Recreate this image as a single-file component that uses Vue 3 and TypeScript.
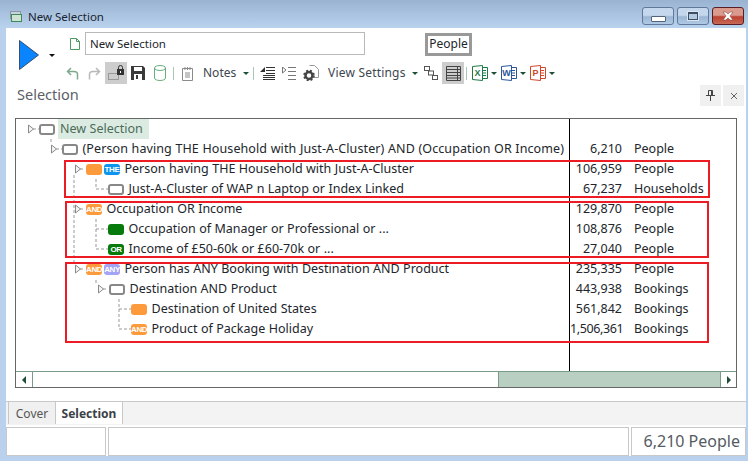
<template>
  <div class="app">
    <header class="titlebar">
      <svg class="title-icon" width="12" height="11" viewBox="0 0 12 11">
        <rect x="0.5" y="0.5" width="10" height="7" fill="#c9d3df" stroke="#8b97a5" />
        <rect x="1.5" y="3.5" width="10" height="7" fill="#cfe3d4" stroke="#3f8a5a" />
      </svg>
      <span class="title-text">New Selection</span>
      <div class="win-btns">
        <button class="win-btn" type="button"><i class="min-glyph"></i></button>
        <button class="win-btn" type="button"><i class="max-glyph"></i></button>
        <button class="win-btn close" type="button">
          <svg width="14" height="10" viewBox="0 0 14 10">
            <path d="M2 1h3l2 2 2-2h3L9 5l3 4H9L7 7 5 9H2l3-4z" fill="#fff" stroke="#8c4a40" stroke-width="0.6" />
          </svg>
        </button>
      </div>
    </header>

    <main class="client">
      <section class="ribbon">
        <div class="run">
          <svg width="20" height="30" viewBox="0 0 20 30">
            <path d="M0.5 0.5 19.5 15 0.5 29.5z" fill="#0a84ff" stroke="#35506e" />
          </svg>
          <i class="caret black"></i>
        </div>
        <div class="ribbon-rows">
          <div class="name-row">
            <svg class="doc" width="10" height="12" viewBox="0 0 10 12">
              <path d="M.5.5h6l3 3v8h-9zM6.5.5v3h3" fill="#fff" stroke="#4c9a5f" />
            </svg>
            <div class="name-input">New Selection</div>
            <div class="unit-box">People</div>
          </div>
          <div class="tools">
            <span class="tb">
              <svg width="13" height="13" viewBox="0 0 13 13">
                <path d="M11.5 12.5V7.5Q11.5 4.5 8 4.5H2M5 1 1.5 4.5 5 8" fill="none" stroke="#7fa98c" stroke-width="1.5" />
              </svg>
            </span>
            <span class="tb">
              <svg width="13" height="13" viewBox="0 0 13 13">
                <path d="M1.5 12.5V7.5Q1.5 4.5 5 4.5h6M8 1l3.5 3.5L8 8" fill="none" stroke="#b9b9b9" stroke-width="1.5" />
              </svg>
            </span>
            <span class="tb active">
              <svg width="16" height="16" viewBox="0 0 16 16">
                <rect x="0.5" y="8.5" width="10" height="6" fill="none" stroke="#999" />
                <rect x="9" y="4" width="7" height="6" fill="#333" />
                <path d="M10.5 4V2.5a2 2 0 0 1 4 0V4" fill="none" stroke="#333" />
                <rect x="12" y="6" width="1" height="2" fill="#fff" />
              </svg>
            </span>
            <span class="tb">
              <svg width="14" height="14" viewBox="0 0 14 14">
                <path d="M0 0h12l2 2v12H0z" fill="#3a3a3a" />
                <rect x="3" y="1" width="8" height="4" fill="#fff" />
                <rect x="3" y="8" width="8" height="6" fill="#fff" />
                <rect x="5" y="9" width="2" height="4" fill="#3a3a3a" />
              </svg>
            </span>
            <span class="tb">
              <svg width="12" height="16" viewBox="0 0 12 16">
                <path d="M.5 3v10c0 3.3 11 3.3 11 0V3M.5 3c0-3.3 11-3.3 11 0s-11 3.3-11 0z" fill="#fff" stroke="#6aae7e" />
              </svg>
            </span>
            <i class="sep"></i>
            <span class="tb">
              <svg width="11" height="15" viewBox="0 0 11 15">
                <path d="M.5 2.5h10v12H.5zM3 1v3M5.5 1v3M8 1v3M3 7h5M3 9h5M3 11h5" fill="#fff" stroke="#8a8a8a" />
              </svg>
            </span>
            <span class="tool-text notes">Notes</span>
            <i class="caret green caret-notes"></i>
            <i class="sep sep-notes"></i>
            <span class="tb indent-a">
              <svg width="15" height="13" viewBox="0 0 15 13">
                <path d="M5 0v5H0z" fill="#333" />
                <path d="M6 .5h9M6 3.5h9M6 6.5h9M3 8.5h12M3 10.5h12M3 12.5h12" stroke="#333" />
              </svg>
            </span>
            <span class="tb">
              <svg width="14" height="13" viewBox="0 0 14 13">
                <path d="M.5 0v6L4 3z" fill="#fff" stroke="#777" />
                <path d="M6 .5h8M6 4.5h8M6 8.5h8M6 12.5h8" stroke="#777" />
              </svg>
            </span>
            <span class="tb">
              <svg width="16" height="16" viewBox="0 0 16 16">
                <path d="M6.5.5h5l4 4v8h-5" fill="#fff" stroke="#999" />
                <circle cx="6" cy="10.5" r="3.5" fill="none" stroke="#444" stroke-width="2.5" />
                <circle cx="6" cy="10.5" r="5" fill="none" stroke="#444" stroke-width="1.5" stroke-dasharray="2 2" />
              </svg>
            </span>
            <span class="tool-text view">View Settings</span>
            <i class="caret green caret-view"></i>
            <span class="tb hier">
              <svg width="14" height="14" viewBox="0 0 14 14">
                <path d="M3 3 7 7l4 4" stroke="#777" fill="none" />
                <rect x="0.5" y="0.5" width="5" height="4" fill="#fff" stroke="#555" />
                <rect x="4.5" y="5" width="5" height="4" fill="#fff" stroke="#555" />
                <rect x="8.5" y="9.5" width="5" height="4" fill="#fff" stroke="#555" />
              </svg>
            </span>
            <span class="tb active">
              <svg width="15" height="15" viewBox="0 0 15 15">
                <path d="M.5.5h14v14H.5zM.5 3.5h14M.5 6.5h14M.5 9.5h14M.5 12h14M11.5.5v14" fill="none" stroke="#444" />
              </svg>
            </span>
            <i class="sep sep-office"></i>
            <span v-for="app in officeApps" :key="app.letter" class="office">
              <svg width="16" height="16" viewBox="0 0 16 16">
                <path d="M8 2.5h7.5v11H8" fill="#fff" :stroke="app.color" />
                <path d="M11 5.5h3M11 8h3M11 10.5h3" :stroke="app.color" />
                <path d="M.5 1.5 10.5.5v15l-10-1z" fill="#fff" :stroke="app.color" />
                <text x="5.5" y="11" text-anchor="middle" class="office-letter" :fill="app.color">{{ app.letter }}</text>
              </svg>
              <i class="caret green"></i>
            </span>
          </div>
        </div>
      </section>

      <div class="pane-head">
        <span class="pane-title">Selection</span>
        <div class="pane-btns">
          <button class="pane-btn" type="button">
            <svg width="9" height="11" viewBox="0 0 9 11">
              <path d="M2.5.5h4v5h-4zM0 5.5h9M4.5 6v5M5.5 1v4" fill="none" stroke="#444" />
            </svg>
          </button>
          <button class="pane-btn" type="button">
            <svg width="8" height="8" viewBox="0 0 8 8">
              <path d="M1 1l6 6M7 1 1 7" stroke="#666" />
            </svg>
          </button>
        </div>
      </div>

      <section class="tree-panel">
        <div class="tree-body">
          <div class="names">
            <div
              v-for="row in rows"
              :key="row.label"
              class="row"
              :style="{ paddingLeft: row.indent + 'px' }"
            >
              <svg v-if="row.expander" class="expander" width="6" height="10" viewBox="0 0 6 10">
                <path d="M.5 1v8L5.5 5z" fill="#f4f4f4" stroke="#8a8a8a" />
              </svg>
              <span
                v-for="(pill, i) in row.pills"
                :key="i"
                class="pill"
                :class="pill.kind"
              >{{ pill.text }}</span>
              <span class="label" :class="{ selected: row.selected, wide: row.label.length > 60 }">{{ row.label }}</span>
            </div>
          </div>
          <div class="values">
            <div v-for="row in rows" :key="row.label" class="row">
              <span class="count" :class="{ tight: row.count.length > 7 }">{{ row.count }}</span>
              <span class="unit">{{ row.unit }}</span>
            </div>
          </div>

          <svg class="connectors" width="553" height="252" viewBox="16 119 553 252">
            <path
              d="M33 129h6M51 139v4M56 149h6M74 175v87M80 169h5M96 179v10h12M80 209h5M96 219v30h12M96 229h12M80 269h5M96 280v3M103 289h5M119 299v30h12M119 309h12"
              fill="none"
              stroke="#999"
              stroke-dasharray="3 2"
            />
          </svg>
          <i class="redbox box-a"></i>
          <i class="redbox box-b"></i>
          <i class="redbox box-c"></i>
        </div>
        <div class="hscroll">
          <span class="arrow">
            <svg width="5" height="8" viewBox="0 0 5 8"><path d="M4 0v8L0 4z" fill="#1f4d36" /></svg>
          </span>
          <span class="thumb"></span>
          <span class="track"></span>
          <span class="arrow right">
            <svg width="5" height="8" viewBox="0 0 5 8"><path d="M1 0v8l4-4z" fill="#1f4d36" /></svg>
          </span>
        </div>
      </section>

      <nav class="tabs">
        <span class="tab">Cover</span>
        <span class="tab current">Selection</span>
      </nav>

      <footer class="status">
        <span class="cell first"></span>
        <span class="cell middle"></span>
        <span class="cell total">6,210 People</span>
      </footer>
    </main>
  </div>
</template>

<script setup lang="ts">
interface Pill {
  kind: string
  text: string
}

interface TreeRow {
  indent: number
  expander: boolean
  pills: Pill[]
  label: string
  count: string
  unit: string
  selected?: boolean
}

const outline: Pill = { kind: 'outline', text: '' }
const orange: Pill = { kind: 'orange', text: '' }
const green: Pill = { kind: 'green', text: '' }
const and: Pill = { kind: 'orange', text: 'AND' }

const rows: TreeRow[] = [
  { indent: 12, expander: true, pills: [outline], label: 'New Selection', count: '', unit: '', selected: true },
  { indent: 35, expander: true, pills: [outline], label: '(Person having THE Household with Just-A-Cluster) AND (Occupation OR Income)', count: '6,210', unit: 'People' },
  { indent: 59, expander: true, pills: [orange, { kind: 'blue', text: 'THE' }], label: 'Person having THE Household with Just-A-Cluster', count: '106,959', unit: 'People' },
  { indent: 92, expander: false, pills: [outline], label: 'Just-A-Cluster of WAP n Laptop or Index Linked', count: '67,237', unit: 'Households' },
  { indent: 59, expander: true, pills: [and], label: 'Occupation OR Income', count: '129,870', unit: 'People' },
  { indent: 92, expander: false, pills: [green], label: 'Occupation of Manager or Professional or ...', count: '108,876', unit: 'People' },
  { indent: 92, expander: false, pills: [{ kind: 'green', text: 'OR' }], label: 'Income of £50-60k or £60-70k or ...', count: '27,040', unit: 'People' },
  { indent: 59, expander: true, pills: [and, { kind: 'violet', text: 'ANY' }], label: 'Person has ANY Booking with Destination AND Product', count: '235,335', unit: 'People' },
  { indent: 82, expander: true, pills: [outline], label: 'Destination AND Product', count: '443,938', unit: 'Bookings' },
  { indent: 115, expander: false, pills: [orange], label: 'Destination of United States', count: '561,842', unit: 'Bookings' },
  { indent: 115, expander: false, pills: [and], label: 'Product of Package Holiday', count: '1,506,361', unit: 'Bookings' },
]

const officeApps = [
  { letter: 'X', color: '#1e7a45' },
  { letter: 'W', color: '#2b579a' },
  { letter: 'P', color: '#d2472a' },
]
</script>

<style>
html,
body {
  margin: 0;
  background: #b9d1ec;
}
</style>

<style scoped>
.app {
  width: 748px;
  height: 461px;
  display: flex;
  flex-direction: column;
  overflow: hidden;
  background: #b9d1ec;
  font-family: 'Noto Sans', 'Open Sans', sans-serif;
  font-size: 12px;
  color: #22262c;
}

.titlebar {
  flex: none;
  height: 28px;
  display: flex;
  align-items: center;
  padding: 4px 4px 0 10px;
  box-sizing: border-box;
  background: linear-gradient(#99b3d1, #b9d2ee);
}

.title-text {
  margin-left: 6px;
  font-size: 11.5px;
  color: #1b2430;
}

.win-btns {
  margin-left: auto;
  display: flex;
  gap: 3px;
  align-self: flex-start;
  margin-top: 3px;
}

.win-btn {
  width: 32px;
  height: 18px;
  padding: 0;
  display: flex;
  align-items: center;
  justify-content: center;
  box-sizing: border-box;
  border: 1px solid #62789a;
  border-radius: 3px;
  background: linear-gradient(#c5d7ec 0 45%, #9bb6d5 55%, #b0c9e4);
}

.win-btn.close {
  border-color: #5a1f24;
  background: linear-gradient(#db9a8e 0 45%, #bd4031 55%, #c66a55);
}

.min-glyph {
  width: 13px;
  height: 4px;
  margin-top: 5px;
  border: 1px solid #53657d;
  background: #fff;
  border-radius: 1px;
}

.max-glyph {
  width: 8px;
  height: 5px;
  border: 1px solid #3f4f63;
  border-top-width: 2px;
  background: #b5cbe4;
  outline: 1px solid #dce7f4;
}

.client {
  flex: 1;
  margin: 0 2px 5px 6px;
  display: flex;
  flex-direction: column;
  background: #fff;
  min-height: 0;
}

.ribbon {
  flex: none;
  display: flex;
  height: 57px;
  padding-top: 4px;
  box-sizing: border-box;
}

.run {
  width: 55px;
  padding: 8px 0 0 13px;
  box-sizing: border-box;
  display: flex;
  align-items: flex-start;
}

.run .caret {
  margin: 14px 0 0 10px;
}

.ribbon-rows {
  display: flex;
  flex-direction: column;
  gap: 7px;
}

.name-row {
  display: flex;
  align-items: center;
  height: 23px;
  padding-left: 9px;
}

.doc {
  margin-right: 5px;
}

.name-input {
  width: 280px;
  height: 23px;
  box-sizing: border-box;
  border: 1px solid #b9b9b9;
  padding-left: 4px;
  font-size: 11.5px;
  line-height: 21px;
}

.unit-box {
  margin: 1px 0 0 60px;
  width: 47px;
  height: 23px;
  box-sizing: border-box;
  border: 3px solid #999;
  text-align: center;
  line-height: 16px;
}

.tools {
  display: flex;
  align-items: center;
  height: 22px;
}

.tb {
  flex: none;
  width: 22px;
  height: 22px;
  display: flex;
  align-items: center;
  justify-content: center;
}

.tb.active {
  background: #cdcdcd;
}

.sep {
  flex: none;
  width: 1px;
  height: 13px;
  margin: 0 2px;
  background: #a9c8b4;
}

.tool-text {
  flex: none;
  line-height: 20px;
  margin-top: -1px;
  color: #3d4650;
}

.notes {
  margin-left: 5px;
  width: 35px;
}

.caret {
  flex: none;
  width: 0;
  height: 0;
  border-left: 3px solid transparent;
  border-right: 3px solid transparent;
  border-top: 3px solid #1f4d36;
}

.caret.black {
  border-top-color: #111;
}

.caret-notes {
  margin-left: 5px;
}

.sep-notes {
  margin: 0 0 0 4px;
}

.indent-a {
  margin-left: 2px;
}

.view {
  margin-left: 6px;
  width: 78px;
  letter-spacing: 0.2px;
}

.caret-view {
  margin-left: 6px;
}

.hier {
  margin-left: 2px;
}

.sep-office {
  margin: 0 5px 0 2px;
}

.office {
  flex: none;
  width: 29px;
  display: flex;
  align-items: center;
  gap: 3px;
}

.office-letter {
  font-family: 'Liberation Sans', sans-serif;
  font-size: 9px;
  font-weight: 700;
}

.pane-head {
  flex: none;
  height: 33px;
  display: flex;
  align-items: flex-start;
  padding: 0 2px 0 11px;
}

.pane-title {
  font-size: 14.5px;
  color: #5b6068;
  line-height: 18px;
}

.pane-btns {
  margin-left: auto;
  display: flex;
  gap: 2px;
}

.pane-btn {
  width: 21px;
  height: 21px;
  padding: 0;
  border: 0;
  display: flex;
  align-items: center;
  justify-content: center;
  background: #f0f0f0;
}

.tree-panel {
  flex: none;
  width: 722px;
  height: 270px;
  margin-left: 9px;
  box-sizing: border-box;
  border: 1px solid #666;
  display: flex;
  flex-direction: column;
  font-size: 12.5px;
  word-spacing: 0.2px;
}

.tree-body {
  position: relative;
  flex: none;
  height: 252px;
  display: flex;
  overflow: hidden;
}

.names {
  flex: none;
  width: 553px;
  border-right: 1px solid #000;
  white-space: nowrap;
  overflow: hidden;
}

.values {
  flex: 1;
}

.row {
  height: 20px;
  display: flex;
  align-items: center;
  box-sizing: border-box;
  line-height: 20px;
}

.expander {
  flex: none;
  margin-right: 5px;
}

.pill {
  flex: none;
  width: 16px;
  height: 11px;
  margin-right: 2px;
  box-sizing: border-box;
  border-radius: 3px;
  overflow: hidden;
  text-align: center;
  font-family: 'Liberation Sans', sans-serif;
  font-size: 8px;
  font-weight: 700;
  letter-spacing: -0.4px;
  line-height: 11px;
  color: #fff;
}

.pill.outline {
  border: 2px solid #888;
  background: #fff;
}

.pill.orange {
  background: #fd9a3b;
}

.pill.green {
  background: #067a0b;
}

.pill.blue {
  background: #0f94ee;
}

.pill.violet {
  background: #a4a4f4;
}

.label {
  margin-left: 2.5px;
}

.label.wide {
  letter-spacing: 0.1px;
}

.label.selected {
  margin-left: 1px;
  padding: 0 2px;
  width: 87px;
  background: #dcebe2;
  color: #4b6b58;
}

.count {
  width: 52px;
  text-align: right;
  white-space: nowrap;
}

.count.tight {
  letter-spacing: -0.4px;
}

.unit {
  margin-left: 12px;
}

.connectors {
  position: absolute;
  top: 0;
  left: 0;
  pointer-events: none;
}

.redbox {
  position: absolute;
  box-sizing: border-box;
  border: 2px solid #ed1c24;
  pointer-events: none;
}

.box-a {
  left: 48px;
  top: 41px;
  width: 646px;
  height: 38px;
}

.box-b {
  left: 49px;
  top: 82px;
  width: 644px;
  height: 57px;
}

.box-c {
  left: 49px;
  top: 143px;
  width: 644px;
  height: 81px;
}

.hscroll {
  flex: 1;
  display: flex;
  box-sizing: border-box;
  border-top: 1px solid #7a9a8a;
}

.arrow {
  flex: none;
  width: 17px;
  display: flex;
  align-items: center;
  justify-content: center;
  border-right: 1px solid #7a9a8a;
  box-sizing: border-box;
}

.arrow.right {
  width: 16px;
  border-right: 0;
  border-left: 1px solid #7a9a8a;
}

.thumb {
  flex: none;
  width: 466px;
  border-right: 1px solid #7a9a8a;
  box-sizing: border-box;
}

.track {
  flex: 1;
  background: #b9cfc2;
}

.tabs {
  flex: none;
  height: 24px;
  margin-top: 13px;
  padding-left: 2px;
  display: flex;
  box-sizing: border-box;
  border-top: 1px solid #c8c8c8;
  background: #f3f3f3;
}

.tab {
  height: 23px;
  margin-top: -1px;
  box-sizing: border-box;
  border: 1px solid #c8c8c8;
  border-bottom: 0;
  text-align: center;
  line-height: 23px;
}

.tab:first-child {
  width: 48px;
  background: #f0f0f0;
  color: #555;
}

.tab.current {
  width: 68px;
  margin-left: -1px;
  background: #fff;
  font-weight: 700;
  color: #3c4147;
}

.status {
  flex: none;
  height: 29px;
  margin-top: 2px;
  display: flex;
  gap: 2px;
}

.cell {
  box-sizing: border-box;
  border: 1px solid #c8c8c8;
}

.first {
  width: 100px;
}

.middle {
  width: 521px;
}

.total {
  flex: 1;
  padding-right: 5px;
  font-size: 16px;
  line-height: 27px;
  text-align: right;
  color: #555b63;
}
</style>
